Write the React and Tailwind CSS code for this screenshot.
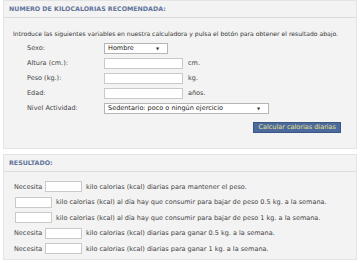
import { useState } from 'react';

const font = { fontFamily: '"DejaVu Sans", Verdana, sans-serif' };

// ===== small reusable bits =====
const Box = ({ className = '' }) => (
    <div className={`h-[11px] bg-white border border-[#c9c9c9] ${className}`} />
);

const Select = ({ value, className = '' }) => (
    <div className={`h-[11px] bg-white border border-[#b5b5b5] flex items-center justify-between pl-[3px] pr-[8px] ${className}`}>
        <span className="text-[6.5px] text-[#222] leading-none">{value}</span>
        <span className="text-[4px] text-[#333] leading-none">▼</span>
    </div>
);

const Panel = ({ title, children, className = '' }) => (
    <div className={`mx-[3px] bg-[#f3f3f3] border border-[#e4e4e4] ${className}`}>
        <div className="h-[17px] border-b border-[#dcdcdc] flex items-center pl-[5px]">
            <span className="text-[6.3px] font-bold text-[#62739a] leading-none">{title}</span>
        </div>
        {children}
    </div>
);

const FormRow = ({ label, children }) => (
    <div className="flex items-center h-[15px]">
        <span className="w-[100px] pl-[23px] text-[6.5px] text-[#444] leading-none shrink-0">{label}</span>
        {children}
    </div>
);

const App = () => {
    const [level] = useState('Sedentario: poco o ningún ejercicio');

    return (
        <div className="w-[360px] h-[263px] bg-white" style={font}>
            {/* ===== FORM PANEL ===== */}
            <Panel title="NUMERO DE KILOCALORIAS RECOMENDADA:" className="h-[149px]">
                <p className="pl-[9px] pt-[13px] text-[6.1px] text-[#333] leading-none whitespace-nowrap">
                    Introduce las siguientes variables en nuestra calculadora y pulsa el botón para obtener el resultado abajo.
                </p>
                <div className="mt-[4px]">
                    <FormRow label="Sexo:">
                        <Select value="Hombre" className="w-[64px]" />
                    </FormRow>
                    <FormRow label="Altura (cm.):">
                        <Box className="w-[79px]" />
                        <span className="ml-[5px] text-[6.5px] text-[#444] leading-none">cm.</span>
                    </FormRow>
                    <FormRow label="Peso (kg.):">
                        <Box className="w-[79px]" />
                        <span className="ml-[5px] text-[6.5px] text-[#444] leading-none">kg.</span>
                    </FormRow>
                    <FormRow label="Edad:">
                        <Box className="w-[79px]" />
                        <span className="ml-[5px] text-[6.5px] text-[#444] leading-none">años.</span>
                    </FormRow>
                    <FormRow label="Nivel Actividad:">
                        <Select value={level} className="w-[165px]" />
                    </FormRow>
                </div>
                <div className="flex justify-end pr-[15px] mt-[6px]">
                    <button className="h-[11px] px-[4px] bg-[#4d6a9e] border border-[#3b5585] text-[6.5px] text-[#e6e08a] leading-none">
                        Calcular calorias diarias
                    </button>
                </div>
            </Panel>

            {/* ===== RESULT PANEL ===== */}
            <Panel title="RESULTADO:" className="mt-[5px] h-[106px]">
                <div className="pl-[10px] pt-[7px] text-[6.5px] text-[#444] leading-none">
                    <div className="flex items-center h-[15.5px]">
                        <span className="w-[31px]">Necesita</span>
                        <Box className="w-[37px]" />
                        <span className="ml-[4px]">kilo calorias (kcal) diarias para mantener el peso.</span>
                    </div>
                    <div className="flex items-center h-[15.5px]">
                        <Box className="w-[37px] ml-[1px]" />
                        <span className="ml-[4px]">kilo calorias (kcal) al día hay que consumir para bajar de peso 0.5 kg. a la semana.</span>
                    </div>
                    <div className="flex items-center h-[15.5px]">
                        <Box className="w-[37px] ml-[1px]" />
                        <span className="ml-[4px]">kilo calorias (kcal) al día hay que consumir para bajar de peso 1 kg. a la semana.</span>
                    </div>
                    <div className="flex items-center h-[15.5px]">
                        <span className="w-[31px]">Necesita</span>
                        <Box className="w-[37px]" />
                        <span className="ml-[4px]">kilo calorias (kcal) diarias para ganar 0.5 kg. a la semana.</span>
                    </div>
                    <div className="flex items-center h-[15.5px]">
                        <span className="w-[31px]">Necesita</span>
                        <Box className="w-[37px]" />
                        <span className="ml-[4px]">kilo calorias (kcal) diarias para ganar 1 kg. a la semana.</span>
                    </div>
                </div>
            </Panel>
        </div>
    );
};

export default App;
